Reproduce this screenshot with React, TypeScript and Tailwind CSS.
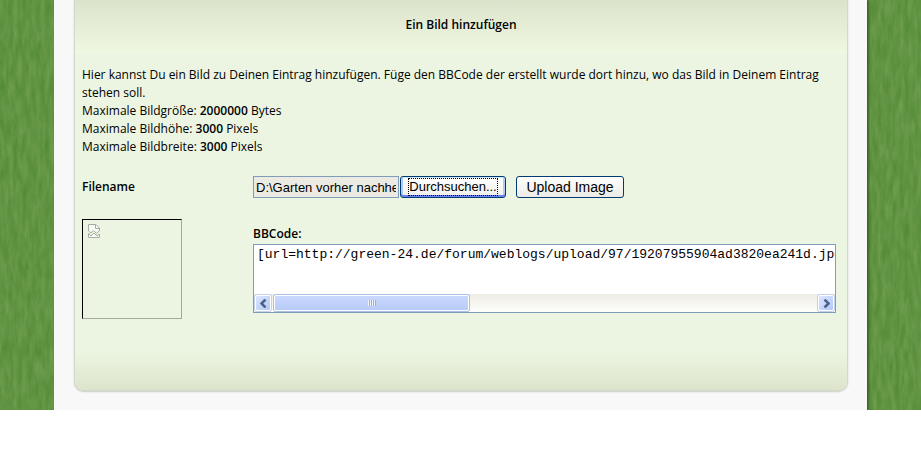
import { useState } from "react";

const limits = [
  { label: "Maximale Bildgröße", value: "2000000", unit: "Bytes" },
  { label: "Maximale Bildhöhe", value: "3000", unit: "Pixels" },
  { label: "Maximale Bildbreite", value: "3000", unit: "Pixels" },
];

// Vertical blades of grass, used on both sides of the page column
function Grass() {
  return (
    <svg className="absolute inset-0 h-full w-full" aria-hidden="true">
      <filter id="grass" x="0" y="0" width="100%" height="100%" colorInterpolationFilters="sRGB">
        <feTurbulence type="fractalNoise" baseFrequency="0.22 0.05" numOctaves="3" seed="4" />
        <feColorMatrix
          values="0.15 0 0 0 0.305
                  0.11 0 0 0 0.525
                  0.14 0 0 0 0.19
                  0 0 0 0 1"
        />
      </filter>
      <rect width="100%" height="100%" filter="url(#grass)" />
    </svg>
  );
}

function BrokenImage() {
  return (
    <svg width="12" height="14" viewBox="0 0 12 14" fill="none" stroke="#a9aca5">
      <path d="M0.5 7V0.5H8L11.5 4V7" fill="#fafcf6" />
      <path d="M7.5 0.5V4.5H11.5" />
      <path d="M0.5 7L3 9L5.5 6.5L8.5 9.5L11.5 6.5" />
      <path d="M0.5 9.5V13.5H11.5V10L9 12L6 9L3 12L0.5 9.5Z" fill="#fafcf6" />
    </svg>
  );
}

interface ArrowProps {
  direction: "left" | "right";
  onClick: () => void;
}

function ScrollArrow({ direction, onClick }: ArrowProps) {
  return (
    <button
      type="button"
      onClick={onClick}
      aria-label={direction === "left" ? "Nach links" : "Nach rechts"}
      className="flex h-4 w-4 shrink-0 items-center justify-center rounded-xs border border-white bg-linear-to-br from-[#dbe6ff] to-[#b3c8f8] shadow-[0_0_0_1px_#c3d0ee]"
    >
      <svg width="7" height="9" viewBox="0 0 7 9" fill="none" stroke="#4d6185" strokeWidth="2.5">
        <path d={direction === "left" ? "M5.5 0.5L1.5 4.5L5.5 8.5" : "M1.5 0.5L5.5 4.5L1.5 8.5"} />
      </svg>
    </button>
  );
}

export default function App() {
  const [code, setCode] = useState(
    "[url=http://green-24.de/forum/weblogs/upload/97/19207955904ad3820ea241d.jpg]"
  );

  const scrollCode = (amount: number) => {
    document.getElementById("bbcode")?.scrollBy({ left: amount });
  };

  return (
    <div className="bg-white font-['Open_Sans',sans-serif] text-xs leading-[18px] text-black">
      <div className="relative bg-[#5f9542] px-[54px]">
        <Grass />
        <main className="relative bg-[#f8f8f8] pr-[19px] pb-[18px] pl-5 shadow-[2px_0_2px_0_#3e6329]">
          <section className="overflow-hidden rounded-b-[10px] border-x border-b-2 border-[#d3d8cc] bg-[#ecf5e1] shadow-[0_0_2px_#d0d0d0]">
            <header className="flex h-[54px] justify-center bg-linear-to-b from-[#dce3cb] to-[#eff8e2] pt-4">
              <h1 className="font-semibold">Ein Bild hinzufügen</h1>
            </header>

            <form className="pt-3 pr-[11px] pl-[7px]" onSubmit={(e) => e.preventDefault()}>
              <p>
                Hier kannst Du ein Bild zu Deinen Eintrag hinzufügen. Füge den BBCode der erstellt wurde dort
                hinzu, wo das Bild in Deinem Eintrag stehen soll.
              </p>
              {limits.map((limit) => (
                <p key={limit.label}>
                  {limit.label}: <b className="font-semibold">{limit.value}</b> {limit.unit}
                </p>
              ))}

              <div className="mt-5 grid grid-cols-[171px_1fr] items-center">
                <label htmlFor="filename" className="font-semibold">
                  Filename
                </label>
                <div className="flex font-['Liberation_Sans',sans-serif] text-[13px]">
                  <input
                    id="filename"
                    type="text"
                    readOnly
                    defaultValue="D:\Garten vorher nachher.jpg"
                    className="h-[22px] w-[146px] border border-[#7f9db9] bg-[#ebebe4] px-[2px]"
                  />
                  <button
                    type="button"
                    className="ml-px h-[22px] w-[106px] rounded-[3px] border border-[#003c74] bg-linear-to-b from-white to-[#f0f0ea] p-px shadow-[inset_0_1px_0_#cee7ff,inset_0_-2px_0_#6982ee,inset_2px_0_0_#b2cbf5,inset_-2px_0_0_#b2cbf5]"
                  >
                    <span className="mx-[6px] flex h-[18px] items-center justify-center border border-dotted border-black">
                      Durchsuchen...
                    </span>
                  </button>
                  <button
                    type="submit"
                    className="ml-[10px] h-[22px] w-[108px] rounded-[3px] border border-[#003c74] bg-linear-to-b from-white to-[#ecebe5] text-sm leading-[18px]"
                  >
                    Upload Image
                  </button>
                </div>
              </div>

              <div className="mt-[21px] grid grid-cols-[171px_1fr]">
                <div
                  role="img"
                  aria-label="Vorschau"
                  className="h-[100px] w-[100px] border border-t-black border-r-[#a5aa9f] border-b-[#a5aa9f] border-l-black pt-1 pl-[5px]"
                >
                  <BrokenImage />
                </div>
                <div className="min-w-0 pt-[6px]">
                  <label htmlFor="bbcode" className="block font-semibold">
                    BBCode:
                  </label>
                  <div className="mt-px border border-[#7f9db9] bg-white">
                    <textarea
                      id="bbcode"
                      wrap="off"
                      value={code}
                      onChange={(e) => setCode(e.target.value)}
                      className="block h-[49px] w-full resize-none overflow-hidden px-[3px] pt-0.5 font-['Liberation_Mono',monospace] text-[13px] leading-4 outline-none"
                    />
                    <div className="flex h-[18px] items-center gap-[3px] bg-linear-to-b from-[#eeede5] to-[#fefefb] px-px">
                      <ScrollArrow direction="left" onClick={() => scrollCode(-40)} />
                      <div className="flex-1">
                        <div className="flex h-4 w-[36%] items-center justify-center gap-px rounded-xs border border-white bg-linear-to-b from-[#c9d8fd] to-[#b8cbf8] shadow-[0_0_0_1px_#a9bfe8]">
                          {[0, 1, 2, 3].map((grip) => (
                            <span key={grip} className="h-[6px] w-px bg-[#eef4fe] shadow-[1px_0_0_#8cb0f8]" />
                          ))}
                        </div>
                      </div>
                      <ScrollArrow direction="right" onClick={() => scrollCode(40)} />
                    </div>
                  </div>
                </div>
              </div>
            </form>

            <footer className="mt-[31px] h-10 bg-linear-to-b from-[#edf6e1] to-[#dce4cc]" />
          </section>
        </main>
      </div>
    </div>
  );
}
